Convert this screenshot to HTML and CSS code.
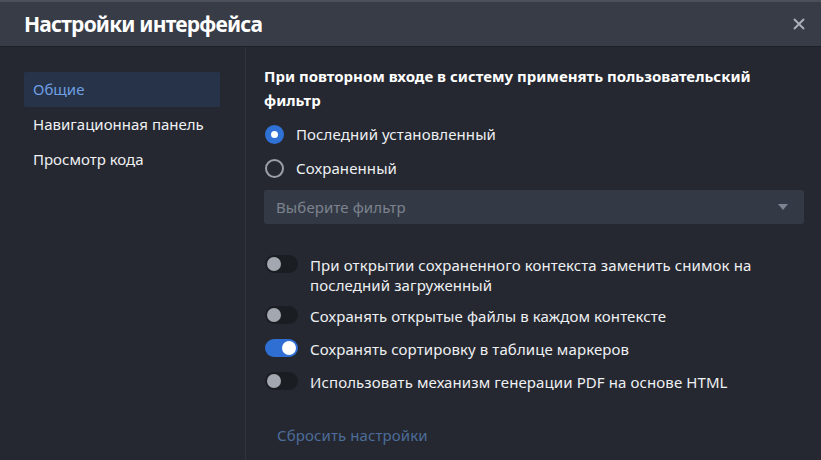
FILE: index.html
```html
<!DOCTYPE html>
<html lang="ru">
<head>
	<meta charset="UTF-8">
	<meta name="viewport" content="width=device-width, initial-scale=1.0">
	<title>Настройки интерфейса</title>
	<link rel="stylesheet" href="styles.css">
</head>
<body>
	<div class="dialog">
		<div class="dialog-head">
			<h1>Настройки интерфейса</h1>
			<svg class="close" width="12" height="12" viewBox="0 0 12 12">
				<path d="M1 1L11 11M11 1L1 11" stroke="#a9aebb" stroke-width="2"/>
			</svg>
		</div>
		<div class="dialog-body">
			<ul class="side">
				<li class="active">Общие</li>
				<li>Навигационная панель</li>
				<li>Просмотр кода</li>
			</ul>
			<div class="main">
				<h2>При повторном входе в систему применять пользовательский фильтр</h2>

				<label class="radio checked"><i></i>Последний установленный</label>
				<label class="radio"><i></i>Сохраненный</label>

				<div class="select">
					<span>Выберите фильтр</span>
					<b class="arrow"></b>
				</div>

				<div class="toggles">
					<label class="toggle"><i></i><span>При открытии сохраненного контекста заменить снимок на последний загруженный</span></label>
					<label class="toggle"><i></i><span>Сохранять открытые файлы в каждом контексте</span></label>
					<label class="toggle on"><i></i><span>Сохранять сортировку в таблице маркеров</span></label>
					<label class="toggle"><i></i><span>Использовать механизм генерации PDF на основе HTML</span></label>
				</div>

				<a class="reset">Сбросить настройки</a>
			</div>
		</div>
	</div>
</body>
</html>
```

FILE: styles.css
```css
*{
	margin: 0;
	padding: 0;
	box-sizing: border-box;
}
body{
	background: #252830;
	font-family: "Noto Sans", "Open Sans", sans-serif;
	font-size: 15px;
	color: #e6e8ec;
}
.dialog{
	width: 821px;
	height: 460px;
	display: flex;
	flex-direction: column;
	overflow: hidden;
}
.dialog-head{
	height: 47px;
	flex: none;
	display: flex;
	align-items: center;
	justify-content: space-between;
	padding: 0 16px 0 24px;
	background: #373c46;
	border-top: 2px solid #4b5059;
	border-bottom: 1px solid #1d2026;
}
.dialog-head h1{
	font-size: 21px;
	font-weight: 700;
	color: #ffffff;
	letter-spacing: -0.8px;
}
.close{
	display: block;
}
.dialog-body{
	flex: 1;
	display: flex;
}

/* левое меню разделов */
.side{
	list-style: none;
	width: 246px;
	flex: none;
	padding: 25px 25px 0 24px;
	border-right: 1px solid #30343c;
}
.side li{
	height: 35px;
	line-height: 35px;
	padding-left: 9px;
	border-radius: 2px;
	color: #f0f1f4;
}
.side li.active{
	background: #263348;
	color: #6f9fe2;
}

.main{
	flex: 1;
	padding: 17px 17px 0 18px;
	display: flex;
	flex-direction: column;
	letter-spacing: 0.1px;
}
.main h2{
	font-size: 15px;
	font-weight: 700;
	line-height: 24px;
	color: #ffffff;
	margin-bottom: 5px;
	letter-spacing: 0;
}
.radio{
	display: flex;
	align-items: center;
	height: 34px;
	color: #eef0f3;
}
.radio i{
	width: 19px;
	height: 19px;
	border-radius: 50%;
	border: 2px solid #9a9fa9;
	margin: 0 12px 0 1px;
}
.radio.checked i{
	border: 6px solid #3071d6;
	background: #ffffff;
}

.select{
	height: 34px;
	margin-top: 5px;
	background: #343a45;
	border-radius: 3px;
	display: flex;
	align-items: center;
	justify-content: space-between;
	padding: 0 16px 0 12px;
	color: #7c828e;
}
.arrow{
	width: 0;
	height: 0;
	border-left: 5px solid transparent;
	border-right: 5px solid transparent;
	border-top: 6px solid #7d8390;
}

.toggles{
	margin-top: 31px;
	display: flex;
	flex-direction: column;
	gap: 11px;
}
.toggle{
	display: flex;
	align-items: flex-start;
	min-height: 22px;
	line-height: 20px;
	color: #eef0f3;
}
.toggle i{
	flex: none;
	position: relative;
	width: 33px;
	height: 18px;
	margin: 0 12px 0 1px;
	border-radius: 9px;
	background: #1a1d22;
}
/* кружок переключателя */
.toggle i::after{
	content: "";
	position: absolute;
	left: 2px;
	top: 2px;
	width: 14px;
	height: 14px;
	border-radius: 50%;
	background: #a3a7b0;
}
.toggle.on i{
	background: #2f6fd4;
}
.toggle.on i::after{
	left: 17px;
	background: #ffffff;
}

.reset{
	margin-top: 31px;
	padding-left: 13px;
	color: #4d6d9a;
	cursor: pointer;
}
```
